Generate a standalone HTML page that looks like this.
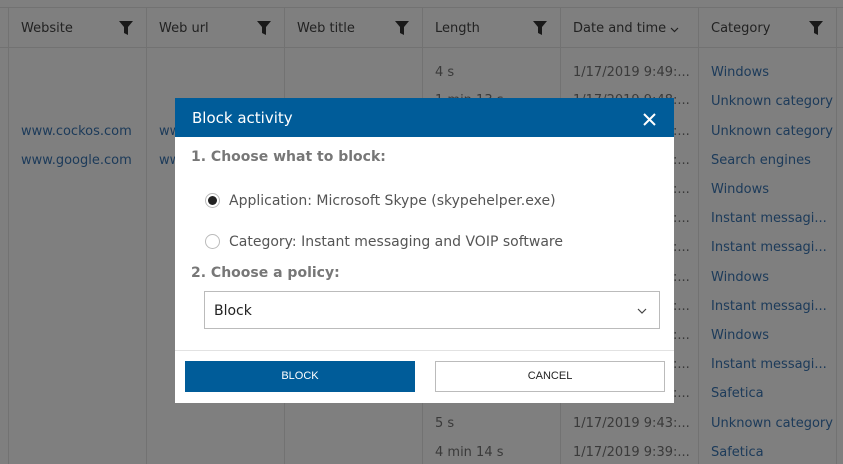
<!DOCTYPE html>
<html><head><style>
*{box-sizing:border-box;margin:0;padding:0}
html,body{width:843px;height:464px;overflow:hidden;background:#fff}
#pg{position:absolute;left:0;top:0;width:843px;height:464px;background:#fefefe;overflow:hidden;font-family:"DejaVu Sans","Liberation Sans",sans-serif;font-size:13px;color:#444}
#ov{position:absolute;left:0;top:0;width:843px;height:464px;background:rgba(0,0,0,0.5)}
.vl{position:absolute;top:8px;bottom:0;width:1px;background:#e4e4e4}
.hl{position:absolute;left:0;right:0;height:1px;background:#e4e4e4}
.h{position:absolute;top:21px;font-size:13px;color:#444}
.f{position:absolute;top:20px;width:14px;height:15px}
.c{position:absolute;font-size:13px;white-space:nowrap}
.lk{color:#3a76b4}
.gr{color:#747474}
#dlg{position:absolute;left:175px;top:98px;width:499px;height:305px;background:#fff}
#hd{height:39px;background:#005c99;color:#fff;font-size:15px;padding:11px 0 0 17px}
.b{position:absolute;font-weight:bold;color:#777;font-size:14px}
.r{position:absolute;color:#555;font-size:14px}
</style></head><body><div id="pg">
<div class="hl" style="top:7px"></div>
<div class="hl" style="top:47px"></div>
<div class="vl" style="left:8px"></div><div class="vl" style="left:146px"></div><div class="vl" style="left:284px"></div><div class="vl" style="left:422px"></div><div class="vl" style="left:560px"></div><div class="vl" style="left:698px"></div><div class="vl" style="left:836px"></div>
<div class="h" style="left:21px">Website</div>
<div class="h" style="left:159px">Web url</div>
<div class="h" style="left:297px">Web title</div>
<div class="h" style="left:435px">Length</div>
<div class="h" style="left:573px">Date and time</div>
<svg style="position:absolute;left:670px;top:27px" width="9" height="6" viewBox="0 0 9 6"><path d="M1 1l3.5 3.5L8 1" stroke="#444" fill="none" stroke-width="1.2"/></svg>
<div class="h" style="left:711px">Category</div>
<svg class="f" style="left:119px" viewBox="0 0 14 15"><path d="M0 1h14l-5 6v8l-4-2V7z" fill="#333"/></svg>
<svg class="f" style="left:257px" viewBox="0 0 14 15"><path d="M0 1h14l-5 6v8l-4-2V7z" fill="#333"/></svg>
<svg class="f" style="left:395px" viewBox="0 0 14 15"><path d="M0 1h14l-5 6v8l-4-2V7z" fill="#333"/></svg>
<svg class="f" style="left:533px" viewBox="0 0 14 15"><path d="M0 1h14l-5 6v8l-4-2V7z" fill="#333"/></svg>
<svg class="f" style="left:809px" viewBox="0 0 14 15"><path d="M0 1h14l-5 6v8l-4-2V7z" fill="#333"/></svg>

<div class="c gr" style="left:435px;top:65px">4 s</div>
<div class="c gr" style="left:573px;top:65px">1/17/2019 9:49:...</div>
<div class="c gr" style="left:435px;top:93px">1 min 13 s</div>
<div class="c gr" style="left:573px;top:93px">1/17/2019 9:48:...</div>
<div class="c lk" style="left:21px;top:124px">www.cockos.com</div>
<div class="c lk" style="left:159px;top:124px">www.cockos.com</div>
<div class="c lk" style="left:21px;top:153px">www.google.com</div>
<div class="c lk" style="left:159px;top:153px">www.google.com</div>
<div class="c gr" style="left:573px;top:124px">1/17/2019 9:48:...</div>
<div class="c gr" style="left:573px;top:153px">1/17/2019 9:48:...</div>
<div class="c gr" style="left:573px;top:182px">1/17/2019 9:47:...</div>
<div class="c gr" style="left:573px;top:211px">1/17/2019 9:47:...</div>
<div class="c gr" style="left:573px;top:240px">1/17/2019 9:47:...</div>
<div class="c gr" style="left:573px;top:270px">1/17/2019 9:46:...</div>
<div class="c gr" style="left:573px;top:299px">1/17/2019 9:46:...</div>
<div class="c gr" style="left:573px;top:328px">1/17/2019 9:45:...</div>
<div class="c gr" style="left:573px;top:357px">1/17/2019 9:44:...</div>
<div class="c gr" style="left:573px;top:386px">1/17/2019 9:44:...</div>
<div class="c gr" style="left:435px;top:416px">5 s</div>
<div class="c gr" style="left:573px;top:416px">1/17/2019 9:43:...</div>
<div class="c gr" style="left:435px;top:445px">4 min 14 s</div>
<div class="c gr" style="left:573px;top:445px">1/17/2019 9:39:...</div>

<div class="c lk" style="left:711px;top:65px">Windows</div>
<div class="c lk" style="left:711px;top:94px">Unknown category</div>
<div class="c lk" style="left:711px;top:124px">Unknown category</div>
<div class="c lk" style="left:711px;top:153px">Search engines</div>
<div class="c lk" style="left:711px;top:182px">Windows</div>
<div class="c lk" style="left:711px;top:211px">Instant messagi...</div>
<div class="c lk" style="left:711px;top:240px">Instant messagi...</div>
<div class="c lk" style="left:711px;top:270px">Windows</div>
<div class="c lk" style="left:711px;top:299px">Instant messagi...</div>
<div class="c lk" style="left:711px;top:328px">Windows</div>
<div class="c lk" style="left:711px;top:357px">Instant messagi...</div>
<div class="c lk" style="left:711px;top:386px">Safetica</div>
<div class="c lk" style="left:711px;top:416px">Unknown category</div>
<div class="c lk" style="left:711px;top:445px">Safetica</div>

<div id="ov"></div>

<div id="dlg">
<div id="hd">Block activity</div>
<svg style="position:absolute;left:468px;top:15px" width="13" height="13" viewBox="0 0 13 13"><path d="M1 1L12 12M12 1L1 12" stroke="#fff" stroke-width="2"/></svg>
<div class="b" style="left:16px;top:51px">1. Choose what to block:</div>
<div style="position:absolute;left:30px;top:95px;width:15px;height:15px;border:1px solid #bbb;border-radius:50%"><div style="width:9px;height:9px;margin:2px;border-radius:50%;background:#222"></div></div>
<div class="r" style="left:54px;top:95px">Application: Microsoft Skype (skypehelper.exe)</div>
<div style="position:absolute;left:30px;top:136px;width:15px;height:15px;border:1px solid #bbb;border-radius:50%"></div>
<div class="r" style="left:54px;top:136px">Category: Instant messaging and VOIP software</div>
<div class="b" style="left:16px;top:167px">2. Choose a policy:</div>
<div style="position:absolute;left:29px;top:193px;width:456px;height:38px;border:1px solid #bbb"><span style="position:absolute;left:9px;top:11px;font-size:14px;color:#222">Block</span><svg style="position:absolute;right:12px;top:16px" width="10" height="6" viewBox="0 0 10 6"><path d="M1 1l4 4 4-4" stroke="#444" fill="none" stroke-width="1.2"/></svg></div>
<div style="position:absolute;left:0;right:0;top:252px;height:1px;background:#e2e2e2"></div>
<div style="position:absolute;left:10px;top:263px;width:230px;height:31px;background:#005c99;color:#fff;font-family:'Liberation Sans',sans-serif;font-size:11px;text-align:center;line-height:31px">BLOCK</div>
<div style="position:absolute;left:260px;top:263px;width:230px;height:31px;border:1px solid #bbb;color:#222;font-family:'Liberation Sans',sans-serif;font-size:11px;text-align:center;line-height:29px">CANCEL</div>
</div>
</div></body></html>
